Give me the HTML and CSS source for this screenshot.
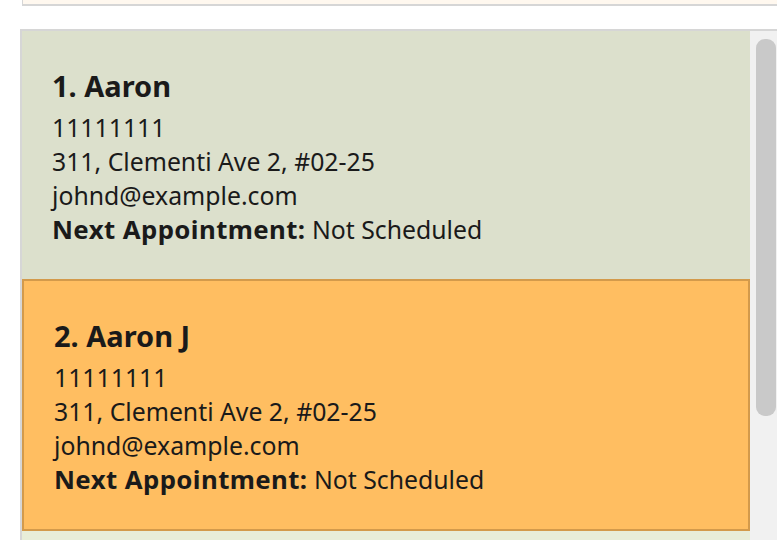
FILE: index.html
```html
<!DOCTYPE html>
<html>
<head>
<meta charset="utf-8">
<link rel="stylesheet" href="styles.css">
</head>
<body>
<div class="top-box"></div>
<div class="panel">
  <div class="list">
    <div class="card">
      <div class="name">1. Aaron</div>
      <div class="line">11111111</div>
      <div class="line">311, Clementi Ave 2, #02-25</div>
      <div class="line">johnd@example.com</div>
      <div class="line"><b>Next Appointment:</b> Not Scheduled</div>
    </div>
    <div class="card selected">
      <div class="name">2. Aaron J</div>
      <div class="line">11111111</div>
      <div class="line">311, Clementi Ave 2, #02-25</div>
      <div class="line">johnd@example.com</div>
      <div class="line"><b>Next Appointment:</b> Not Scheduled</div>
    </div>
    <div class="card odd"></div>
  </div>
  <div class="scrollbar"><div class="thumb"></div></div>
</div>
</body>
</html>
```
FILE: styles.css
```css
html, body {
  margin: 0;
  padding: 0;
  background: #ffffff;
  overflow: hidden;
  height: 540px;
}
body {
  font-family: "Noto Sans", "Open Sans", sans-serif;
  color: #1a1a1a;
}
.top-box {
  margin-left: 22px;
  height: 4px;
  background: #fff8ef;
  border: 1px solid #d6d6d6;
  border-top: none;
  border-right: none;
  border-bottom-width: 2px;
}
.panel {
  margin-top: 23px;
  margin-left: 20px;
  border-top: 2px solid #d6d6d6;
  border-left: 2px solid #d6d6d6;
  display: flex;
  height: 520px;
  overflow: hidden;
}
.list {
  flex: 1;
  display: flex;
  flex-direction: column;
}
.card {
  flex: none;
  height: 248px;
  box-sizing: border-box;
  background: #dce0cc;
  padding: 35px 20px 0 30px;
}
.card.selected {
  height: 252px;
  background: #ffbe61;
  border: 2px solid #d39a4b;
}
.card.odd {
  background: #e8edd8;
}
.name {
  font-size: 29px;
  font-weight: 700;
  line-height: 40px;
  margin-bottom: 3.5px;
}
.line {
  font-size: 24.8px;
  line-height: 34.3px;
}
.line b {
  font-weight: 700;
  font-size: 25.8px;
  letter-spacing: 0.4px;
}
.scrollbar {
  width: 27px;
  flex: none;
  background: #f1f1f1;
  padding: 8px 1px 0 6px;
  box-sizing: border-box;
}
.thumb {
  width: 20px;
  height: 377px;
  background: #c9c9c9;
  border-radius: 9px;
}
```
